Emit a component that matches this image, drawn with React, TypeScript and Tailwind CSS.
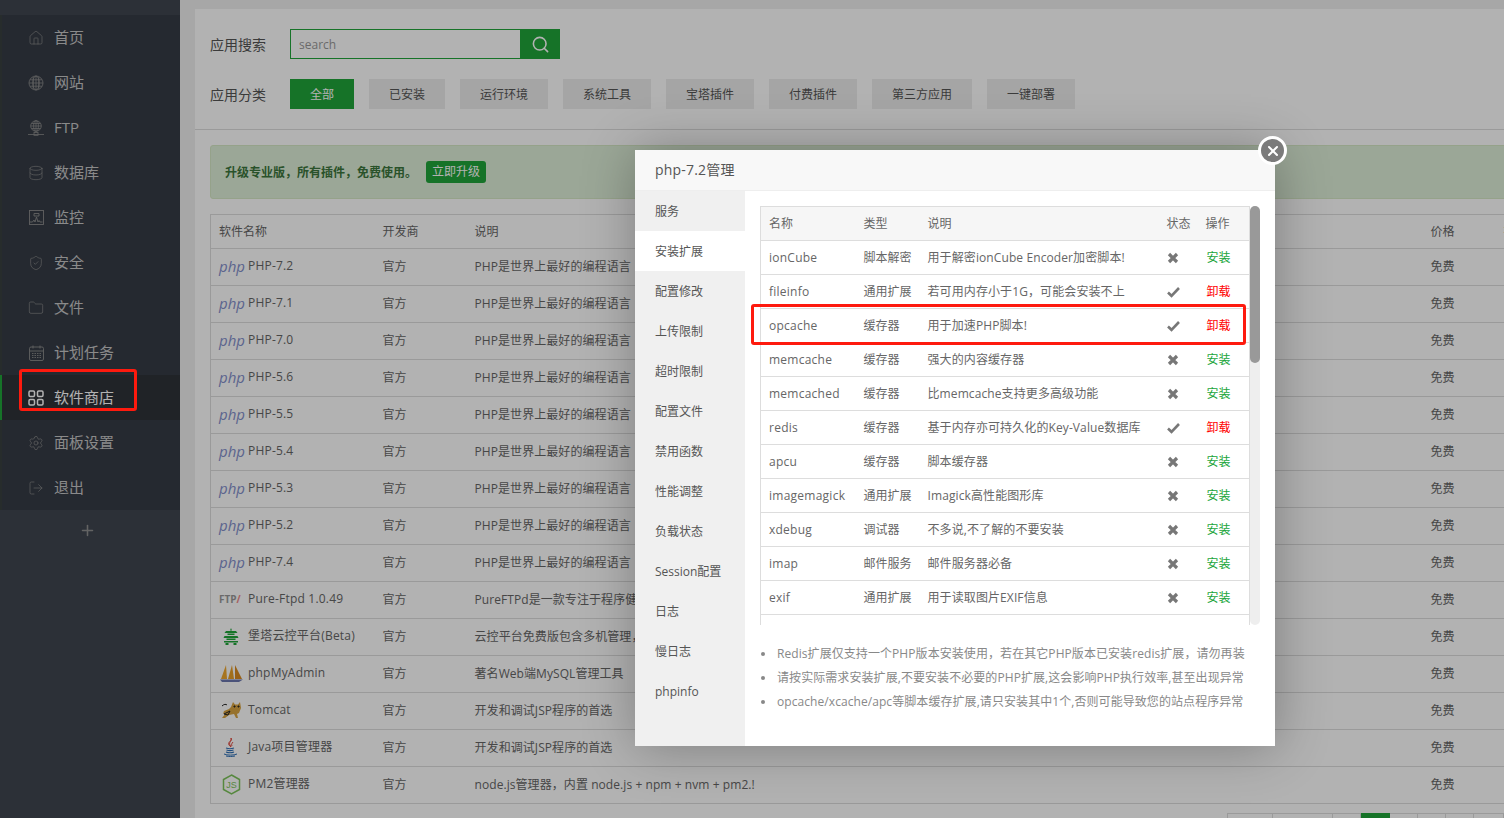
import type { ReactNode } from "react";
import { Database, Folder, House, LogOut, Plus, Search, Settings, ShieldCheck, X } from "lucide-react";

const GlobeIcon = () => (
  <svg width="16" height="16" viewBox="0 0 16 16" fill="none" stroke="currentColor" strokeWidth="0.8">
    <circle cx="8" cy="8" r="7" />
    <ellipse cx="8" cy="8" rx="3.2" ry="7" />
    <path d="M1 8h14M2 4.800h12M2 11.200h12M8 1v14M5.200 1.800v12.400M10.800 1.800v12.400" />
  </svg>
);

const FtpIcon = () => (
  <svg width="16" height="16" viewBox="0 0 16 16" fill="none" stroke="currentColor" strokeWidth="0.8">
    <circle cx="8" cy="6" r="5.300" />
    <ellipse cx="8" cy="6" rx="2.400" ry="5.300" />
    <path d="M2.700 6h10.600M3.500 3.500h9M3.500 8.500h9M8 .7v10.600M0 14.500h16" />
    <rect x="6" y="12.500" width="4" height="2.800" />
  </svg>
);

const MonitorIcon = () => (
  <svg width="15" height="15" viewBox="0 0 15 15" fill="none" stroke="currentColor" strokeWidth="0.9">
    <rect x="0.500" y="0.500" width="14" height="14" />
    <path d="M1 12h2.500l1.500-2 1 2 1.500-5 1.500 5 1-1.500 1 1.500h2.500" />
    <path d="M5 3.500h5v2.500H5z" />
  </svg>
);

const CalendarIcon = () => (
  <svg width="15" height="16" viewBox="0 0 15 16" fill="none" stroke="currentColor" strokeWidth="0.9">
    <rect x="0.500" y="2" width="14" height="13.500" rx="1.500" />
    <path d="M0.500 6h14M4 .5v3M11 .5v3" />
    <path d="M3 8.500h9M3 10.500h9M3 12.500h9" strokeDasharray="1.500 1" />
  </svg>
);

const GridIcon = () => (
  <svg width="16" height="16" viewBox="0 0 16 16" fill="none" stroke="currentColor" strokeWidth="1.5">
    <rect x="1" y="1" width="5.500" height="5.500" rx="1.200" />
    <rect x="9.500" y="1" width="5.500" height="5.500" rx="1.200" />
    <rect x="1" y="9.500" width="5.500" height="5.500" rx="1.200" />
    <rect x="9.500" y="9.500" width="5.500" height="5.500" rx="1.200" />
  </svg>
);

const CrossMark = () => (
  <svg width="12" height="12" viewBox="0 0 12 12" fill="none" stroke="currentColor" strokeWidth="3.200">
    <path d="M2 2l8 8M10 2l-8 8" />
  </svg>
);

const CheckMark = () => (
  <svg width="13" height="12" viewBox="0 0 13 12" fill="none" stroke="currentColor" strokeWidth="2.600">
    <path d="M1 6.500l3.500 3.300L12 2" />
  </svg>
);

const thin = { size: 16, strokeWidth: 1 };

const menu: { label: string; icon: ReactNode; active?: boolean }[] = [
  { label: "首页", icon: <House {...thin} /> },
  { label: "网站", icon: <GlobeIcon /> },
  { label: "FTP", icon: <FtpIcon /> },
  { label: "数据库", icon: <Database {...thin} /> },
  { label: "监控", icon: <MonitorIcon /> },
  { label: "安全", icon: <ShieldCheck {...thin} /> },
  { label: "文件", icon: <Folder {...thin} /> },
  { label: "计划任务", icon: <CalendarIcon /> },
  { label: "软件商店", icon: <GridIcon />, active: true },
  { label: "面板设置", icon: <Settings {...thin} /> },
  { label: "退出", icon: <LogOut {...thin} /> },
];

const categories = ["全部", "已安装", "运行环境", "系统工具", "宝塔插件", "付费插件", "第三方应用", "一键部署"];

const PhpLogo = () => <span className="text-[15px] leading-none text-[#8490cc] italic">php</span>;

const FtpLogo = () => (
  <span className="text-[10px] leading-none font-bold text-[#999]">
    FTP<span className="text-[#e88]">/</span>
  </span>
);

const PagodaLogo = () => (
  <svg className="ml-[4px]" width="16" height="17" viewBox="0 0 16 17" fill="#20a53a">
    <path d="M8 0l1 2.500h-2zM3 3h10l1.500 2h-13zM4.500 5.500h7v1.500h-7zM1.500 8h13l1 2h-15zM3.500 10.500h9v1.500h-9zM1 13h14v1.500H1zM2.500 15h3v2h-3zM10.500 15h3v2h-3z" />
  </svg>
);

const BoatLogo = () => (
  <svg className="ml-[1px]" width="23" height="19" viewBox="0 0 23 19">
    <path d="M6 1L1 15h6z" fill="#f0a830" />
    <path d="M12 1L8 15h6z" fill="#e8a028" />
    <path d="M15 1v14h7z" fill="#d88a20" />
    <path d="M0 15.500h23l-4 2.500H2z" fill="#6c78af" />
  </svg>
);

const TomcatLogo = () => (
  <svg className="ml-[1px]" width="22" height="18" viewBox="0 0 22 18">
    <path d="M13 1l2 2.500h3L20 1l1 6-2 5-2 1 1 4h-2l-2-4-5 1-4 3H2l4-5-3 1 1-3 5-2 2-2z" fill="#d9a441" />
    <path d="M14 5h1v1h-1zM18 5h1v1h-1zM4 13l6-3-2 4zM2 5c2-2 4-2 5-1" fill="none" stroke="#222" strokeWidth="1" />
  </svg>
);

const JavaLogo = () => (
  <svg className="ml-[4px]" width="15" height="19" viewBox="0 0 15 19" fill="none">
    <path d="M8 0c2 3-3 4-1 7 .5 1 1 1.500 1 2-2-1.500-3-3-2-4.500C7 3 8.500 2 8 0zM10 4c-1 1.500-2 2-1 4" stroke="#e04a3f" strokeWidth="1" />
    <path d="M3 10c2 .7 6 .7 8 0M3.500 12c2 .7 5 .7 7 0M3 14c2 .8 6 .8 8 0" stroke="#2f6fb5" strokeWidth="1.100" />
    <path d="M1 16c3 1.500 10 1.500 13 0M3 18c3 .7 6 .7 9 0" stroke="#2f6fb5" strokeWidth="1" />
  </svg>
);

const NodeLogo = () => (
  <svg className="ml-[3px]" width="19" height="21" viewBox="0 0 19 21" fill="none">
    <path d="M9.500 1l8 4.500v10l-8 4.500-8-4.500v-10z" stroke="#7cc35a" strokeWidth="1.500" />
    <text x="9.500" y="14" textAnchor="middle" fontSize="9" fill="#7cc35a" fontFamily="Liberation Sans, sans-serif">JS</text>
  </svg>
);

const desc = "PHP是世界上最好的编程语言";
const jsp = "开发和调试JSP程序的首选";
const apps: { name: string; logo: ReactNode; text: string }[] = [
  { name: "PHP-7.2", logo: <PhpLogo />, text: desc },
  { name: "PHP-7.1", logo: <PhpLogo />, text: desc },
  { name: "PHP-7.0", logo: <PhpLogo />, text: desc },
  { name: "PHP-5.6", logo: <PhpLogo />, text: desc },
  { name: "PHP-5.5", logo: <PhpLogo />, text: desc },
  { name: "PHP-5.4", logo: <PhpLogo />, text: desc },
  { name: "PHP-5.3", logo: <PhpLogo />, text: desc },
  { name: "PHP-5.2", logo: <PhpLogo />, text: desc },
  { name: "PHP-7.4", logo: <PhpLogo />, text: desc },
  { name: "Pure-Ftpd 1.0.49", logo: <FtpLogo />, text: "PureFTPd是一款专注于程序健壮和软件安全的免费FTP服务器软件" },
  { name: "堡塔云控平台(Beta)", logo: <PagodaLogo />, text: "云控平台免费版包含多机管理，批量部署和统一监控等功能" },
  { name: "phpMyAdmin", logo: <BoatLogo />, text: "著名Web端MySQL管理工具" },
  { name: "Tomcat", logo: <TomcatLogo />, text: jsp },
  { name: "Java项目管理器", logo: <JavaLogo />, text: jsp },
  { name: "PM2管理器", logo: <NodeLogo />, text: "node.js管理器，内置 node.js + npm + nvm + pm2.!" },
];

const tabs = ["服务", "安装扩展", "配置修改", "上传限制", "超时限制", "配置文件", "禁用函数", "性能调整", "负载状态", "Session配置", "日志", "慢日志", "phpinfo"];

const extensions = [
  ["ionCube", "脚本解密", "用于解密ionCube Encoder加密脚本!", false],
  ["fileinfo", "通用扩展", "若可用内存小于1G，可能会安装不上", true],
  ["opcache", "缓存器", "用于加速PHP脚本!", true],
  ["memcache", "缓存器", "强大的内容缓存器", false],
  ["memcached", "缓存器", "比memcache支持更多高级功能", false],
  ["redis", "缓存器", "基于内存亦可持久化的Key-Value数据库", true],
  ["apcu", "缓存器", "脚本缓存器", false],
  ["imagemagick", "通用扩展", "Imagick高性能图形库", false],
  ["xdebug", "调试器", "不多说,不了解的不要安装", false],
  ["imap", "邮件服务", "邮件服务器必备", false],
  ["exif", "通用扩展", "用于读取图片EXIF信息", false],
] as const;

const notes = [
  "Redis扩展仅支持一个PHP版本安装使用，若在其它PHP版本已安装redis扩展，请勿再装",
  "请按实际需求安装扩展,不要安装不必要的PHP扩展,这会影响PHP执行效率,甚至出现异常",
  "opcache/xcache/apc等脚本缓存扩展,请只安装其中1个,否则可能导致您的站点程序异常",
];

function Sidebar() {
  return (
    <aside className="w-[180px] shrink-0 bg-[#3f4650] pt-[15px]">
      <ul className="bg-[#363c46]">
        {menu.map((item) => (
          <li
            key={item.label}
            className={
              item.active
                ? "flex h-[45px] items-center gap-[10px] border-l-[2px] border-[#20a53a] bg-[#2f3339] pl-[26px] text-[15px] text-white"
                : "flex h-[45px] items-center gap-[10px] border-l-[2px] border-[#38403f] pl-[26px] text-[15px] text-[#c6c6c6]"
            }
          >
            <span className={item.active ? "flex w-[16px] justify-center text-white" : "flex w-[16px] justify-center text-[#8c8c8c]"}>{item.icon}</span>
            {item.label}
          </li>
        ))}
      </ul>
      <div className="flex h-[40px] items-center justify-center pr-[5px] text-[#8f8f8f]">
        <Plus size={17} strokeWidth={2.200} />
      </div>
    </aside>
  );
}

function AppTable() {
  return (
    <table className="w-full table-fixed border-collapse text-[12px] text-[#666]">
      <colgroup>
        <col className="w-[164px]" />
        <col className="w-[92px]" />
        <col className="w-[956px]" />
        <col className="w-[73px]" />
        <col />
      </colgroup>
      <thead>
        <tr className="h-[34px] border border-[#ddd]">
          <th className="pl-[8px] text-left font-normal">软件名称</th>
          <th className="pl-[8px] text-left font-normal">开发商</th>
          <th className="pl-[8px] text-left font-normal">说明</th>
          <th className="pl-[8px] text-left font-normal">价格</th>
          <th className="pl-[8px] text-left font-normal whitespace-nowrap">操作</th>
        </tr>
      </thead>
      <tbody>
        {apps.map((app) => (
          <tr key={app.name} className="h-[37px] border border-[#ddd]">
            <td className="pl-[8px]">
              <div className="flex -translate-y-px items-center">
                <span className="flex w-[29px] shrink-0 items-center justify-start">{app.logo}</span>
                <span className="tracking-[0.2px] whitespace-nowrap">{app.name}</span>
              </div>
            </td>
            <td className="pl-[8px]">官方</td>
            <td className="overflow-hidden pl-[8px] tracking-[0.07px] whitespace-nowrap">{app.text}</td>
            <td className="pl-[8px]">免费</td>
            <td />
          </tr>
        ))}
      </tbody>
    </table>
  );
}

function SoftPanel() {
  return (
    <div className="min-h-full w-[1340px] bg-white">
      <div className="flex h-[121px] flex-col gap-[20px] border-b border-[#ddd] px-[15px] pt-[20px]">
        <div className="flex h-[30px] items-center">
          <span className="w-[80px] text-[14px] text-[#555]">应用搜索</span>
          <input placeholder="search" className="h-[30px] w-[231px] border border-[#20a53a] bg-white px-2 text-[12px] outline-none placeholder:text-[#999]" />
          <button className="flex h-[30px] w-[39px] items-center justify-center bg-[#20a53a] text-white">
            <Search size={19} strokeWidth={2} />
          </button>
        </div>
        <div className="flex h-[30px] items-center">
          <span className="w-[80px] text-[14px] text-[#555]">应用分类</span>
          <div className="flex gap-[15px]">
            {categories.map((c, i) => (
              <span
                key={c}
                className={
                  i === 0
                    ? "flex h-[30px] items-center bg-[#20a53a] px-[20px] pt-[1px] text-[12px] text-white"
                    : "flex h-[30px] items-center bg-[#ececec] px-[20px] pt-[1px] text-[12px] text-[#555]"
                }
              >
                {c}
              </span>
            ))}
          </div>
        </div>
      </div>
      <div className="px-[15px] pt-[15px]">
        <div className="flex h-[54px] items-center gap-[9px] rounded-[3px] border border-[#d6e9c6] bg-[#dff0d8] pl-[14px]">
          <span className="pt-[1px] text-[12px] font-bold text-[#3c763d]">升级专业版，所有插件，免费使用。</span>
          <span className="flex h-[22px] w-[60px] items-center justify-center rounded-[3px] bg-[#20a53a] text-[12px] text-white">立即升级</span>
        </div>
        <div className="mt-[15px]">
          <AppTable />
        </div>
        <div className="mt-[9px] flex h-[30px] justify-end pr-[16px]">
          <div className="flex">
            <span className="h-[30px] w-[46px] border border-[#ddd]" />
            <span className="h-[30px] w-[60px] border-y border-r border-[#ddd]" />
            <span className="h-[30px] w-[28px] border-y border-r border-[#ddd]" />
            <span className="h-[30px] w-[29px] bg-[#20a53a]" />
            <span className="h-[30px] w-[28px] border-y border-r border-[#ddd]" />
            <span className="h-[30px] w-[28px] border-y border-r border-[#ddd]" />
            <span className="h-[30px] w-[28px] border-y border-r border-[#ddd]" />
            <span className="h-[30px] w-[30px] border-y border-r border-[#ddd]" />
          </div>
        </div>
      </div>
    </div>
  );
}

function ExtTable() {
  return (
    <table className="w-[489px] table-fixed border-collapse text-[12px] text-[#666]">
      <colgroup>
        <col className="w-[95px]" />
        <col className="w-[64px]" />
        <col className="w-[239px]" />
        <col className="w-[39px]" />
        <col className="w-[52px]" />
      </colgroup>
      <thead>
        <tr className="h-[34px] border border-[#ddd] bg-[#f6f6f6]">
          <th className="pl-[8px] text-left font-normal">名称</th>
          <th className="pl-[8px] text-left font-normal">类型</th>
          <th className="pl-[8px] text-left font-normal">说明</th>
          <th className="pl-[8px] text-left font-normal">状态</th>
          <th className="pl-[8px] text-left font-normal">操作</th>
        </tr>
      </thead>
      <tbody>
        {extensions.map(([name, type, text, installed]) => (
          <tr key={name} className="h-[34px] border border-[#ddd]">
            <td className="pl-[8px] tracking-[0.25px]">{name}</td>
            <td className="pl-[8px]">{type}</td>
            <td className="pl-[8px] tracking-[0.1px] whitespace-nowrap">{text}</td>
            <td className="pl-[8px] text-[#777]">{installed ? <CheckMark /> : <CrossMark />}</td>
            <td className={installed ? "pl-[9px] text-[#ff0000]" : "pl-[9px] text-[#20a53a]"}>{installed ? "卸载" : "安装"}</td>
          </tr>
        ))}
        <tr className="h-[34px] border border-[#ddd]">
          <td colSpan={5} />
        </tr>
      </tbody>
    </table>
  );
}

function Modal() {
  return (
    <div className="absolute top-[150px] left-[635px] flex h-[596px] w-[640px] flex-col bg-white shadow-[1px_1px_50px_rgba(0,0,0,0.3)]">
      <div className="flex h-[41px] shrink-0 items-center border-b border-[#eee] bg-[#f8f8f8] pb-[2px] pl-[20px] text-[14px] tracking-[0.2px] text-[#555]">php-7.2管理</div>
      <div className="flex min-h-0 flex-1">
        <ul className="w-[110px] shrink-0 bg-[#f0f0f0] text-[12px] text-[#555]">
          {tabs.map((t, i) => (
            <li key={t} className={i === 1 ? "flex h-[40px] items-center bg-white pt-[2px] pl-[20px]" : "flex h-[40px] items-center pt-[2px] pl-[20px]"}>
              {t}
            </li>
          ))}
        </ul>
        <div className="flex-1 pt-[15px] pl-[15px]">
          <div className="flex h-[419px]">
            <div className="w-[490px] shrink-0 overflow-hidden">
              <ExtTable />
            </div>
            <div className="h-full w-[10px] rounded-[5px] bg-[#eee]">
              <div className="h-[157px] w-[10px] rounded-[5px] bg-[#999]" />
            </div>
          </div>
          <ul className="mt-[17px] flex flex-col text-[12px] tracking-[0.07px] text-[#888]">
            {notes.map((n) => (
              <li key={n} className="flex h-[24px] items-center whitespace-nowrap">
                <span className="mr-[12px] ml-[1px] h-[4px] w-[4px] shrink-0 rounded-full bg-[#888]" />
                {n}
              </li>
            ))}
          </ul>
        </div>
      </div>
      <button className="absolute -top-[14px] -right-[12px] flex h-[29px] w-[29px] items-center justify-center rounded-full border-[3px] border-white bg-[#7b7b7b] text-white">
        <X size={16} strokeWidth={3} />
      </button>
    </div>
  );
}

export default function App() {
  return (
    <div className="relative flex h-[818px] w-[1504px] overflow-hidden bg-[#f0f0f0] [font-family:'Open_Sans','Noto_Sans_CJK_SC',sans-serif]">
      <Sidebar />
      <main className="min-w-0 flex-1 overflow-hidden pt-[9px] pl-[15px]">
        <SoftPanel />
      </main>
      <div className="absolute inset-0 bg-black/30" />
      <Modal />
      {/* red marks drawn on the screenshot */}
      <div className="absolute top-[369px] left-[19px] h-[42px] w-[118px] rounded-[3px] border-[3px] border-[#fe1a0e]" />
      <div className="absolute top-[304px] left-[751px] h-[41px] w-[495px] rounded-[3px] border-[3px] border-[#fe1a0e]" />
    </div>
  );
}
